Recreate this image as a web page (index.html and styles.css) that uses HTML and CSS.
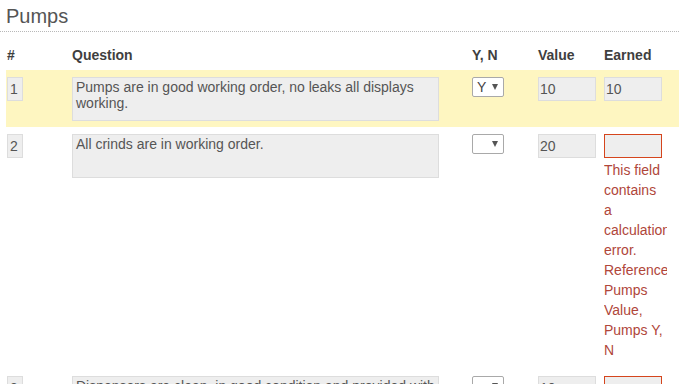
FILE: index.html
```html
<!DOCTYPE html>
<html lang="en">
<head>
    <meta charset="UTF-8" />
    <meta name="viewport" content="width=device-width, initial-scale=1.0" />
    <title>Pumps</title>
    <link rel="stylesheet" href="styles.css">
</head>
<body>
<div class="section">
    <h2 class="section-title">Pumps</h2>

    <div class="checklist">
        <div class="row list-header">
            <div>#</div>
            <div>Question</div>
            <div>Y, N</div>
            <div>Value</div>
            <div>Earned</div>
        </div>

        <div class="row row-answered">
            <div><span class="field field-num">1</span></div>
            <div><div class="field field-question">Pumps are in good working order, no leaks all displays working.</div></div>
            <div><div class="select">Y <span class="caret"></span></div></div>
            <div><span class="field field-small">10</span></div>
            <div><span class="field field-small">10</span></div>
        </div>

        <div class="row">
            <div><span class="field field-num">2</span></div>
            <div><div class="field field-question">All crinds are in working order.</div></div>
            <div><div class="select"><span class="caret"></span></div></div>
            <div><span class="field field-small">20</span></div>
            <div>
                <span class="field field-small field-error"></span>
                <div class="error-text">This field contains a calculation error. Reference Pumps Value, Pumps Y, N</div>
            </div>
        </div>

        <div class="row">
            <div><span class="field field-num">3</span></div>
            <div><div class="field field-question">Dispensers are clean, in good condition and provided with guards.</div></div>
            <div><div class="select"><span class="caret"></span></div></div>
            <div><span class="field field-small">10</span></div>
            <div><span class="field field-small field-error"></span></div>
        </div>
    </div>
</div>
</body>
</html>
```

FILE: styles.css
```css
:root {
    --text-color: #555;
    --head-color: #3f3f3f;
    --field-bg: #eeeeee;
    --field-border: #dddddd;
    --row-highlight: #fef6c1;
    --error-color: #b0463a;
    --error-border: #d5451d;
}

* {
    box-sizing: border-box;
}

html,
body {
    margin: 0;
    padding: 0;
    overflow: hidden;
    height: 100%;
}

body {
    font-family: "Liberation Sans", Arial, sans-serif;
    color: var(--text-color);
    background: #fff;
}

.section-title {
    margin: 0;
    padding: 4px 6px 3px;
    font-size: 20px;
    line-height: 24px;
    font-weight: normal;
    color: var(--text-color);
    border-bottom: 1px dotted #b8b8b8;
}

.checklist {
    margin-left: 6px;
    width: 720px;
}

.row {
    display: grid;
    grid-template-columns: 65px 400px 66px 66px 100px;
    align-items: start;
    padding: 7px 0 6px 1px;
}

.list-header {
    padding: 13px 0 5px 1px;
    font-size: 14px;
    line-height: 20px;
    font-weight: bold;
    color: var(--head-color);
}

.row-answered {
    background: var(--row-highlight);
}

.field {
    display: block;
    background: var(--field-bg);
    border: 1px solid var(--field-border);
    font-size: 14px;
    color: var(--text-color);
}

.field-num {
    width: 16px;
    height: 24px;
    line-height: 22px;
    padding-left: 2px;
}

.field-question {
    width: 367px;
    height: 44px;
    padding: 1px 3px;
    line-height: 16px;
}

.field-small {
    width: 58px;
    height: 24px;
    line-height: 22px;
    padding-left: 1px;
}

.field-error {
    border-color: var(--error-border);
}

.error-text {
    width: 63px;
    overflow: hidden;
    margin: 2px 0 3px;
    font-size: 14px;
    line-height: 20px;
    color: var(--error-color);
}

.select {
    display: flex;
    align-items: center;
    justify-content: space-between;
    width: 32px;
    height: 20px;
    padding: 0 5px 0 4px;
    background: #fff;
    border: 1px solid #a9a9a9;
    border-radius: 2px;
    font-size: 14px;
    color: #444;
}

.caret {
    margin-left: auto;
    width: 0;
    height: 0;
    border-left: 3px solid transparent;
    border-right: 3px solid transparent;
    border-top: 6px solid #555;
}
```
